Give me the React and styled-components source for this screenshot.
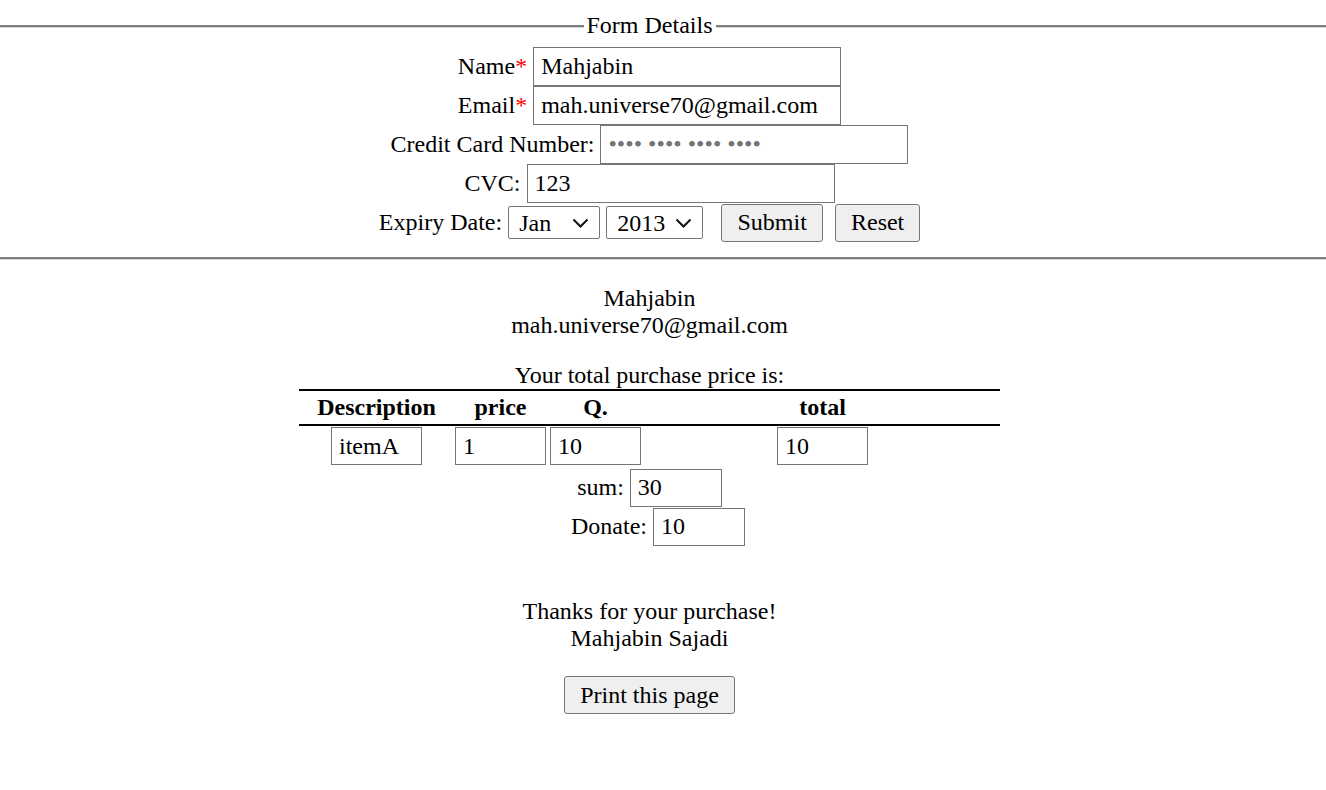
import React from "react";
import styled, { createGlobalStyle } from "styled-components";

const GlobalStyle = createGlobalStyle`
  body {
    margin: 0;
    font-family: "Liberation Serif", "Times New Roman", serif;
    font-size: 24px;
    color: #000;
    background: #fff;
  }
`;

const Fieldset = styled.fieldset`
  margin: 12px 0 0;
  padding: 8px 27px 15px 0;
  border-style: solid;
  border-color: #7f7f7f;
  border-width: 2px 0;
  box-shadow: inset 0 1px 0 #d6d6d6, 0 1px 0 #d6d6d6;
  min-width: 0;
`;

const Legend = styled.legend`
  margin: 0 auto;
  padding: 0 3px;
  background: #fff;
`;

const Row = styled.div`
  display: flex;
  justify-content: center;
  align-items: center;
  height: 39px;
  padding-left: ${(p) => p.$shift || 0}px;
`;

const Label = styled.span`
  margin-right: 6px;
  white-space: nowrap;
`;

const Star = styled.span`
  color: #ff0000;
`;

const TextInput = styled.input`
  box-sizing: border-box;
  width: ${(p) => p.$w || 308}px;
  height: ${(p) => p.$h || 39}px;
  margin: 0;
  padding: 0 7px;
  border: 1px solid #767676;
  border-radius: 0;
  font-family: "Liberation Serif", "Times New Roman", serif;
  font-size: 24px;
  color: #000;
  background: #fff;

  &::placeholder {
    color: #757575;
  }
`;

const SelectWrap = styled.span`
  position: relative;
  display: inline-flex;
  margin-right: 6px;
`;

const Select = styled.select`
  box-sizing: border-box;
  width: ${(p) => p.$w}px;
  height: 33px;
  margin: 0;
  padding: 0 4px 0 10px;
  border: 1px solid #767676;
  border-radius: 2px;
  appearance: none;
  font-family: "Liberation Serif", "Times New Roman", serif;
  font-size: 24px;
  color: #000;
  background: #fff;
`;

const Chevron = styled.svg`
  position: absolute;
  right: 11px;
  top: 12px;
  width: 17px;
  height: 10px;
  pointer-events: none;
`;

const Button = styled.button`
  box-sizing: border-box;
  width: ${(p) => p.$w}px;
  height: 38px;
  margin: 0 0 0 ${(p) => p.$ml || 0}px;
  padding: 0;
  border: 1px solid #767676;
  border-radius: 3px;
  background: #efefef;
  font-family: "Liberation Serif", "Times New Roman", serif;
  font-size: 24px;
  color: #000;
`;

const Main = styled.main`
  padding-right: 27px;
  text-align: center;
`;

const Block = styled.div`
  margin-top: ${(p) => p.$mt || 0}px;
`;

const Line = styled.div``;

const Table = styled.table`
  width: 701px;
  margin: 0 auto;
  border-collapse: collapse;
  table-layout: fixed;

  th {
    height: 33px;
    padding: 0;
    font-weight: bold;
    border-top: 2px solid #000;
    border-bottom: 2px solid #000;
  }

  td {
    height: 41px;
    padding: 1px 0 0;
    vertical-align: top;
    text-align: center;
  }
`;

const Cell = styled.td``;

const items = [{ desc: "itemA", price: "1", qty: "10", total: "10" }];

const DateSelect = ({ w, value, options }) => (
  <SelectWrap>
    <Select $w={w} defaultValue={value}>
      {options.map((o) => (
        <option key={o}>{o}</option>
      ))}
    </Select>
    <Chevron viewBox="0 0 17 10">
      <polyline
        points="1.5,1.5 8.5,8.5 15.5,1.5"
        fill="none"
        stroke="#111"
        strokeWidth="2"
      />
    </Chevron>
  </SelectWrap>
);

const App = () => (
  <>
    <GlobalStyle />
    <form>
      <Fieldset>
        <Legend>Form Details</Legend>
        <Row>
          <Label>
            Name<Star>*</Star>
          </Label>
          <TextInput defaultValue="Mahjabin" />
        </Row>
        <Row>
          <Label>
            Email<Star>*</Star>
          </Label>
          <TextInput defaultValue="mah.universe70@gmail.com" />
        </Row>
        <Row>
          <Label>Credit Card Number:</Label>
          <TextInput placeholder="•••• •••• •••• ••••" />
        </Row>
        <Row>
          <Label>CVC:</Label>
          <TextInput defaultValue="123" />
        </Row>
        <Row>
          <Label>Expiry Date:</Label>
          <DateSelect w={92} value="Jan" options={["Jan", "Feb", "Mar"]} />
          <DateSelect w={97} value="2013" options={["2013", "2014", "2015"]} />
          <Button type="button" $w={102} $ml={12}>
            Submit
          </Button>
          <Button type="reset" $w={85} $ml={12}>
            Reset
          </Button>
        </Row>
      </Fieldset>
    </form>

    <Main>
      <Block $mt={26}>
        <Line>Mahjabin</Line>
        <Line>mah.universe70@gmail.com</Line>
      </Block>
      <Block $mt={23}>
        <Line>Your total purchase price is:</Line>
      </Block>
      <Table>
        <colgroup>
          <col style={{ width: 155 }} />
          <col style={{ width: 93 }} />
          <col style={{ width: 97 }} />
          <col style={{ width: 131 }} />
          <col style={{ width: 95 }} />
          <col style={{ width: 130 }} />
        </colgroup>
        <thead>
          <tr>
            <th>Description</th>
            <th>price</th>
            <th>Q.</th>
            <th />
            <th>total</th>
            <th />
          </tr>
        </thead>
        <tbody>
          {items.map((it) => (
            <tr key={it.desc}>
              <Cell>
                <TextInput $w={91} $h={38} defaultValue={it.desc} />
              </Cell>
              <Cell>
                <TextInput $w={91} $h={38} defaultValue={it.price} />
              </Cell>
              <Cell>
                <TextInput $w={91} $h={38} defaultValue={it.qty} />
              </Cell>
              <Cell />
              <Cell>
                <TextInput $w={91} $h={38} defaultValue={it.total} />
              </Cell>
              <Cell />
            </tr>
          ))}
        </tbody>
      </Table>
      <Row>
        <Label>sum:</Label>
        <TextInput $w={92} $h={38} defaultValue="30" />
      </Row>
      <Row $shift={17}>
        <Label>Donate:</Label>
        <TextInput $w={92} $h={38} defaultValue="10" />
      </Row>
      <Block $mt={52}>
        <Line>Thanks for your purchase!</Line>
        <Line>Mahjabin Sajadi</Line>
      </Block>
      <Block $mt={24}>
        <Button type="button" $w={171}>
          Print this page
        </Button>
      </Block>
    </Main>
  </>
);

export default App;
